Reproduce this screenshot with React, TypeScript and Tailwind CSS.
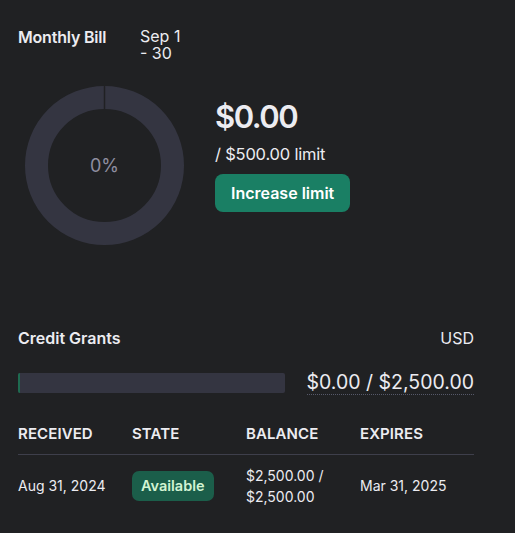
export default function App() {
  return (
    <div
      className="min-h-[533px] w-[515px] bg-[#202123] text-[#ececf1]"
      style={{ fontFamily: "Inter, 'Liberation Sans', sans-serif" }}
    >
      <div className="ml-[18px] w-[456px] pt-[26px]">
        <div className="flex items-start">
          <h2 className="w-[122px] text-[16px] font-semibold leading-[22px] tracking-[-0.2px]">Monthly Bill</h2>
          <div className="pt-[2px] text-[16px] leading-[17px]">
            Sep 1
            <br />- 30
          </div>
        </div>

        <div className="mt-[24px] flex items-center">
          <div className="relative ml-[7px] h-[159px] w-[159px]">
            <svg width="159" height="159" viewBox="0 0 159 159">
              <circle cx="79.5" cy="79.5" r="68" fill="none" stroke="#343541" strokeWidth="23" />
              <line x1="79.5" y1="0" x2="79.5" y2="23" stroke="#202123" strokeWidth="1.5" />
            </svg>
            <div className="absolute inset-0 flex items-center justify-center text-[18px] text-[#8e8ea0]">
              0%
            </div>
          </div>
          <div className="ml-[31px] -mt-[20px] flex flex-col items-start">
            <div className="text-[31px] font-semibold leading-[36px] tracking-[-1.5px]">$0.00</div>
            <div className="mt-[8px] text-[16.5px] leading-[22px] tracking-[-0.2px]">/ $500.00 limit</div>
            <button className="mt-[9px] h-[38px] rounded-[8px] bg-[#1a7f64] px-[16px] text-[16px] font-semibold text-white">
              Increase limit
            </button>
          </div>
        </div>

        <div className="mt-[82px] flex items-center justify-between">
          <h2 className="text-[16px] font-semibold leading-[22px]">Credit Grants</h2>
          <span className="text-[16px] leading-[22px]">USD</span>
        </div>

        <div className="mt-[21px] flex items-center justify-between">
          <div className="flex h-[20px] w-[267px] overflow-hidden rounded-[2px] bg-[#343541]">
            <div className="h-full w-[2px] bg-[#1e6b50]" />
          </div>
          <div className="border-b border-dotted border-[#565869] text-[19.5px] leading-[24px]">
            $0.00 / $2,500.00
          </div>
        </div>

        <div className="mt-[29px] grid grid-cols-[114px_114px_114px_114px] border-b border-[#3e3f4b] pb-[10px] text-[15px] font-semibold uppercase leading-[20px] tracking-[0.1px]">
          <div>Received</div>
          <div>State</div>
          <div>Balance</div>
          <div>Expires</div>
        </div>

        <div className="grid grid-cols-[114px_114px_114px_114px] items-center pt-[10px] text-[14px] leading-[20px]">
          <div>Aug 31, 2024</div>
          <div>
            <span className="inline-flex h-[30px] items-center rounded-[7px] bg-[#1b5e4a] px-[9px] text-[14.5px] font-semibold text-[#d2f4d3]">
              Available
            </span>
          </div>
          <div className="leading-[21px]">
            $2,500.00 /
            <br />
            $2,500.00
          </div>
          <div>Mar 31, 2025</div>
        </div>
      </div>
    </div>
  )
}
